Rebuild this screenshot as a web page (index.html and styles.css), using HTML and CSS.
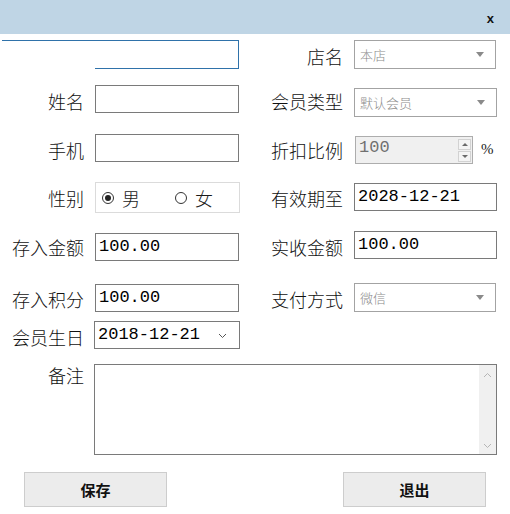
FILE: index.html
```html
<!DOCTYPE html>
<html lang="zh-CN">
<head>
<meta charset="utf-8">
<title>会员信息</title>
<link rel="stylesheet" href="styles.css">
</head>
<body>
<div class="titlebar"><span class="close">x</span></div>

<form class="form">
  <!-- row 1 -->
  <div class="focus-frame"><div class="focus-line"></div></div>
  <label class="lbl">店名</label>
  <div class="select narrow"><span>本店</span><i class="caret"></i></div>

  <!-- row 2 -->
  <label class="lbl">姓名</label>
  <div class="field"></div>
  <label class="lbl">会员类型</label>
  <div class="select shift3"><span>默认会员</span><i class="caret"></i></div>

  <!-- row 3 -->
  <label class="lbl">手机</label>
  <div class="field"></div>
  <label class="lbl">折扣比例</label>
  <div class="spin-wrap shift2">
    <div class="spin">
      <span class="spin-value">100</span>
      <div class="spin-btns">
        <span class="spin-btn"><i class="tri-up"></i></span>
        <span class="spin-btn"><i class="tri-down"></i></span>
      </div>
    </div>
    <span class="pct">%</span>
  </div>

  <!-- row 4 -->
  <label class="lbl">性别</label>
  <div class="radios">
    <span class="radio checked"></span><span class="radio-text">男</span>
    <span class="radio second"></span><span class="radio-text">女</span>
  </div>
  <label class="lbl">有效期至</label>
  <div class="field shift1">2028-12-21</div>

  <!-- row 5 -->
  <label class="lbl">存入金额</label>
  <div class="field shift2">100.00</div>
  <label class="lbl">实收金额</label>
  <div class="field">100.00</div>

  <!-- row 6 -->
  <label class="lbl">存入积分</label>
  <div class="field shift1">100.00</div>
  <label class="lbl">支付方式</label>
  <div class="select narrow"><span>微信</span><i class="caret"></i></div>

  <!-- row 7 -->
  <label class="lbl">会员生日</label>
  <div class="field date">
    <span>2018-12-21</span>
    <svg class="chev" width="9" height="6" viewBox="0 0 9 6"><polyline points="1,1 4.5,4.5 8,1" fill="none" stroke="#555" stroke-width="1"/></svg>
  </div>

  <!-- row 8 -->
  <label class="lbl lbl-top">备注</label>
  <div class="memo">
    <div class="scrollbar">
      <svg width="9" height="6" viewBox="0 0 9 6"><polyline points="1,5 4.5,1.5 8,5" fill="none" stroke="#b5b5b5" stroke-width="1"/></svg>
      <svg width="9" height="6" viewBox="0 0 9 6"><polyline points="1,1 4.5,4.5 8,1" fill="none" stroke="#b5b5b5" stroke-width="1"/></svg>
    </div>
  </div>
</form>

<div class="actions">
  <button class="btn" type="button">保存</button>
  <button class="btn" type="button">退出</button>
</div>
</body>
</html>
```
FILE: styles.css
```css
body {
  margin: 0;
  width: 510px;
  height: 514px;
  overflow: hidden;
  background: #fff;
  font-family: "Noto Sans CJK SC", sans-serif;
  color: #1a1a1a;
}

.titlebar {
  height: 34px;
  background: #bfd5e5;
  display: flex;
  justify-content: flex-end;
  align-items: center;
  padding-right: 16px;
}
.close {
  font: bold 13px "Liberation Sans", sans-serif;
  color: #111;
  line-height: 13px;
  padding-top: 3px;
}

.form {
  display: grid;
  grid-template-columns: 95px 144px 115px 143px;
  grid-template-rows: 45px 49px 48px 49px 52px 38px 43px 91px;
  align-items: start;
  margin-top: 6px;
}

.lbl {
  font-size: 18px;
  font-weight: 300;
  line-height: 28px;
  padding-top: 2px;
  padding-right: 11px;
  text-align: right;
  white-space: nowrap;
  color: #111;
}
.lbl-top {
  grid-column: 1;
  line-height: 22px;
  padding-top: 0;
}

/* focused text box outline in the first row */
.focus-frame {
  grid-column: 1 / 3;
  margin-left: 2px;
  height: 29px;
  box-sizing: border-box;
  border-top: 1px solid #2f72aa;
  border-right: 1px solid #2f72aa;
  display: flex;
  align-items: flex-end;
}
.focus-line {
  margin-left: 93px;
  flex: 1;
  border-bottom: 1px solid #2f72aa;
}

.field {
  height: 28px;
  box-sizing: border-box;
  border: 1px solid #7a7a7a;
  padding-left: 3px;
  font-family: "Liberation Mono", monospace;
  font-size: 17px;
  line-height: 26px;
  color: #000;
}

.shift1 { margin-top: 1px; }
.shift2 { margin-top: 2px; }
.shift3 { margin-top: 3px; }

.select {
  height: 29px;
  box-sizing: border-box;
  border: 1px solid #a3a3a3;
  display: flex;
  align-items: center;
  justify-content: space-between;
  padding: 0 11px 0 5px;
  font-size: 13px;
  font-weight: 300;
  color: #8a8a8a;
}
.select.narrow { width: 142px; }
.caret {
  width: 0;
  height: 0;
  border-left: 4.5px solid transparent;
  border-right: 4.5px solid transparent;
  border-top: 5px solid #8a8a8a;
}

.spin-wrap {
  display: flex;
  align-items: center;
}
.spin {
  margin-left: 1px;
  width: 118px;
  height: 28px;
  box-sizing: border-box;
  border: 1px solid #adadad;
  background: #f0f0f0;
  display: flex;
  justify-content: space-between;
  align-items: center;
  padding: 0 1px 0 3px;
}
.spin-value {
  font-family: "Liberation Mono", monospace;
  font-size: 17px;
  line-height: 26px;
  color: #707070;
  align-self: flex-start;
  margin-top: -2px;
}
.spin-btns {
  display: flex;
  flex-direction: column;
  gap: 1px;
}
.spin-btn {
  width: 13px;
  height: 11px;
  box-sizing: border-box;
  border: 1px solid #d2d2d2;
  background: #f4f4f4;
  display: flex;
  align-items: center;
  justify-content: center;
}
.tri-up, .tri-down {
  width: 0;
  height: 0;
  border-left: 3px solid transparent;
  border-right: 3px solid transparent;
}
.tri-up { border-bottom: 3px solid #6a6a6a; }
.tri-down { border-top: 3px solid #6a6a6a; }
.pct {
  margin-left: 8px;
  font: 15px "Liberation Serif", serif;
  color: #222;
  margin-top: -2px;
}

.radios {
  width: 145px;
  height: 31px;
  box-sizing: border-box;
  border: 1px solid #dbdbdb;
  display: flex;
  align-items: center;
  padding-left: 6px;
}
.radio {
  width: 12px;
  height: 12px;
  box-sizing: border-box;
  border: 1px solid #333;
  border-radius: 50%;
  display: flex;
  align-items: center;
  justify-content: center;
}
.radio.checked::after {
  content: "";
  width: 6px;
  height: 6px;
  border-radius: 50%;
  background: #222;
}
.radio.second { margin-left: 35px; }
.radio-text {
  margin-left: 8px;
  font-size: 18px;
  font-weight: 300;
  line-height: 28px;
}

.date {
  margin-left: -1px;
  width: 146px;
  display: flex;
  align-items: center;
  justify-content: space-between;
  padding-right: 12px;
}
.date span { line-height: 26px; }
.chev { margin-top: 2px; }

.memo {
  grid-column: 2 / 5;
  margin-left: -1px;
  width: 403px;
  height: 91px;
  box-sizing: border-box;
  border: 1px solid #7a7a7a;
  display: flex;
  justify-content: flex-end;
}
.scrollbar {
  width: 17px;
  background: #f0f0f0;
  display: flex;
  flex-direction: column;
  align-items: center;
  justify-content: space-between;
  padding: 7px 0 5px;
}

.actions {
  display: flex;
  justify-content: space-between;
  padding: 0 24px;
  margin-top: 17px;
}
.btn {
  width: 143px;
  height: 35px;
  border: 1px solid #cdcdcd;
  background: #ececec;
  font-family: "Noto Sans CJK SC", sans-serif;
  font-size: 15px;
  font-weight: bold;
  color: #111;
  padding: 0;
}
```
